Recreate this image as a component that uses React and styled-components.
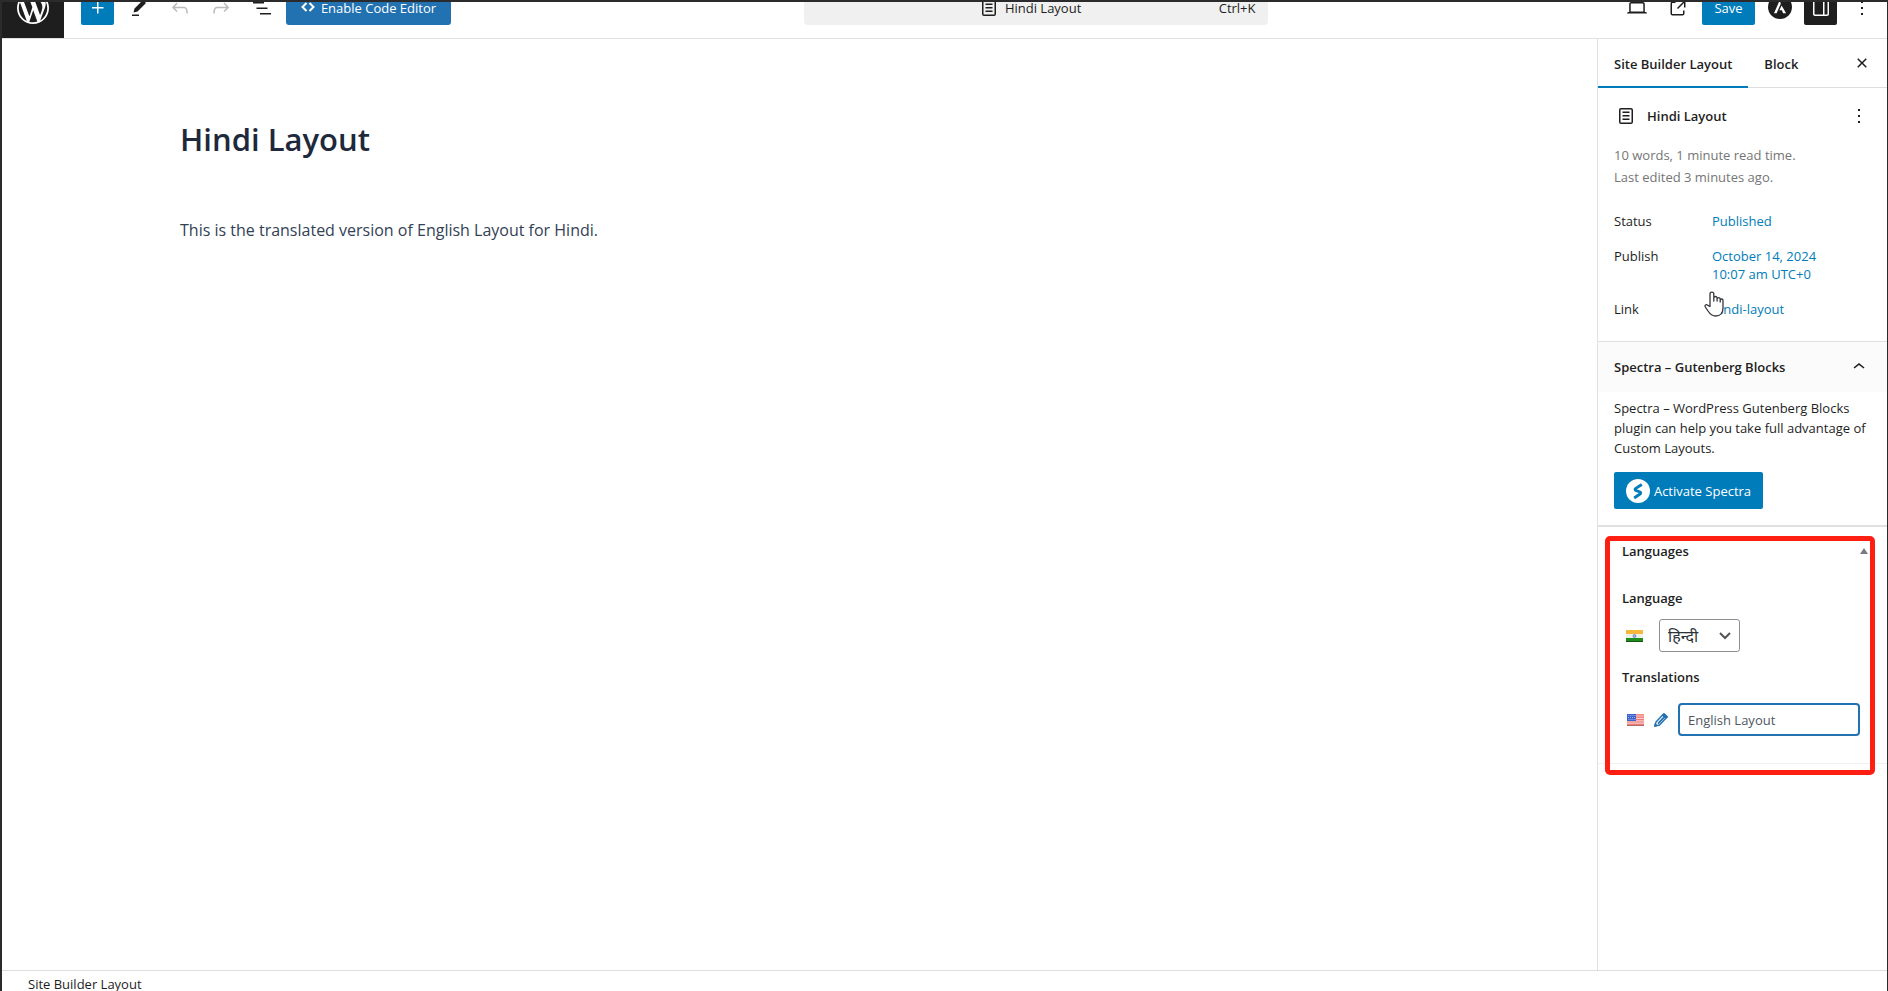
import React, { useState } from 'react'
import styled, { createGlobalStyle, css } from 'styled-components'

const ICONS = {
    plus: "M11 12.5V17.5H12.5V12.5H17.5V11H12.5V6H11V11H6V12.5H11Z",
    tools: "m19 7-3-3-8.5 8.5-1 4 4-1L19 7Zm-7 11.5H5V20h7v-1.5Z",
    undo: "M18.3 11.7c-.6-.6-1.4-.9-2.3-.9H6.7l2.9-3.3-1.1-1-4.5 5L8.5 16l1-1-2.7-2.7H16c.5 0 .9.2 1.3.5 1 1 1 3.4 1 4.5v.3h1.5v-.2c0-1.5 0-4.3-1.5-5.7z",
    redo: "M15.6 6.5l-1.1 1 2.9 3.3H8c-.9 0-1.7.3-2.3.9-1.4 1.5-1.4 4.2-1.4 5.6v.2h1.5v-.3c0-1.1 0-3.5 1-4.5.3-.3.7-.5 1.3-.5h9.2L14.5 15l1.1 1.1 4.6-4.6-4.6-5z",
    list: "M3 6h11v1.5H3V6Zm3.5 5.5h11V13h-11v-1.5ZM21 17H10v1.5h11V17Z",
    desktop: "M20.5 16h-.7V8c0-1.1-.9-2-2-2H6.2c-1.1 0-2 .9-2 2v8h-.7c-.8 0-1.5.7-1.5 1.5h20c0-.8-.7-1.5-1.5-1.5zM5.7 8c0-.3.2-.5.5-.5h11.6c.3 0 .5.2.5.5v7.6H5.7V8z",
    external: "M19.5 4.5h-7V6h4.44l-5.97 5.97 1.06 1.06L18 7.06v4.44h1.5v-7Zm-13 1a2 2 0 0 0-2 2v10a2 2 0 0 0 2 2h10a2 2 0 0 0 2-2v-3H17v3a.5.5 0 0 1-.5.5h-10a.5.5 0 0 1-.5-.5v-10a.5.5 0 0 1 .5-.5h3V5.5h-3Z",
    drawer: "M18 4H6c-1.1 0-2 .9-2 2v12c0 1.1.9 2 2 2h12c1.1 0 2-.9 2-2V6c0-1.1-.9-2-2-2zm-4 14.5H6c-.3 0-.5-.2-.5-.5V6c0-.3.2-.5.5-.5h8v13zm4.5-.5c0 .3-.2.5-.5.5h-2.5v-13H18c.3 0 .5.2.5.5v12z",
    more: "M13 19h-2v-2h2v2zm0-6h-2v-2h2v2zm0-6h-2V5h2v2z",
    page: "M15.5 7.5h-7V9h7V7.5Zm-7 3.5h7v1.5h-7V11Zm7 3.5h-7V16h7v-1.5ZM17 4H7a2 2 0 0 0-2 2v12a2 2 0 0 0 2 2h10a2 2 0 0 0 2-2V6a2 2 0 0 0-2-2ZM7 5.5h10a.5.5 0 0 1 .5.5v12a.5.5 0 0 1-.5.5H7a.5.5 0 0 1-.5-.5V6a.5.5 0 0 1 .5-.5Z",
    close: "M12 13.06l3.712 3.713 1.061-1.06L13.061 12l3.712-3.712-1.06-1.06L12 10.938 8.288 7.227l-1.061 1.06L10.939 12l-3.712 3.712 1.06 1.061L12 13.061z",
    up: "M6.5 12.4L12 8l5.5 4.4-.9 1.2L12 10l-4.5 3.6-1-1.2z",
}

const Icon = ({ name, size = 24 }) => (
    <svg width={size} height={size} viewBox="0 0 24 24" fill="currentColor" fillRule="evenodd" aria-hidden="true">
        <path d={ICONS[name]} />
    </svg>
)

const WordPressIcon = () => (
    <svg width="32" height="32" viewBox="0 0 20 20" fill="currentColor" aria-hidden="true">
        <path fillRule="evenodd" d="M20 10c0-5.51-4.49-10-10-10C4.48 0 0 4.49 0 10c0 5.52 4.48 10 10 10 5.51 0 10-4.48 10-10zM7.78 15.37L4.37 6.22c.55-.02 1.17-.08 1.17-.08.5-.06.44-1.13-.06-1.11 0 0-1.45.11-2.37.11-.18 0-.37 0-.58-.01C4.12 2.69 6.87 1.11 10 1.11c2.33 0 4.45.87 6.05 2.34-.68-.11-1.65.39-1.65 1.58 0 .74.45 1.36.9 2.1.35.61.55 1.36.55 2.46 0 1.49-1.4 5-1.4 5l-3.03-8.37c.54-.02.82-.17.82-.17.5-.05.44-1.25-.06-1.22 0 0-1.44.12-2.38.12-.87 0-2.33-.12-2.33-.12-.5-.03-.56 1.2-.06 1.22l.92.08 1.26 3.41zM17.41 10c.24-.64.74-1.87.43-4.25.7 1.29 1.05 2.71 1.05 4.25 0 3.29-1.73 6.24-4.4 7.78.97-2.59 1.94-5.2 2.92-7.78zM6.1 18.09C3.12 16.65 1.11 13.53 1.11 10c0-1.3.23-2.48.72-3.59C3.25 10.3 4.67 14.2 6.1 18.09zm4.03-6.63l2.58 6.98c-.86.29-1.76.45-2.71.45-.79 0-1.57-.11-2.29-.33.81-2.38 1.62-4.74 2.42-7.1z" />
    </svg>
)

const CodeIcon = () => (
    <svg width="14" height="14" viewBox="0 0 14 14" fill="none" stroke="currentColor" strokeWidth="2" aria-hidden="true">
        <path d="M5.5 2L1.5 6l4 4M8.5 2l4 4-4 4" />
    </svg>
)

const AstraIcon = () => (
    <svg width="24" height="24" viewBox="0 0 24 24" aria-hidden="true">
        <circle cx="12" cy="11" r="12" fill="#1e1e1e" />
        <path d="M11.6 4.5L6 17.2h2.6l4.2-9.5zM13.6 9.5l-2.2 4.7h2.5l1.2 3h3z" fill="#fff" />
    </svg>
)

const SpectraIcon = () => (
    <svg width="24" height="24" viewBox="0 0 24 24" aria-hidden="true">
        <circle cx="12" cy="12" r="12" fill="#fff" />
        <path d="M15.8 5.5L9.8 9.4Q8.3 10.6 9.8 11.6L14 13Q15.5 13.9 14 15L8.2 19" fill="none" stroke="#007cba" strokeWidth="2.8" />
    </svg>
)

const IndiaFlag = () => (
    <svg width="17" height="12" viewBox="0 0 17 12" role="img" aria-label="हिन्दी">
        <rect width="17" height="4" fill="#f5b83d" />
        <rect y="4" width="17" height="4" fill="#eef0ea" />
        <rect y="8" width="17" height="4" fill="#1f8a1f" />
        <rect y="11" width="17" height="1" fill="#14550f" />
        <circle cx="8.5" cy="6" r="1.5" fill="#9db4d8" stroke="#4a6fae" strokeWidth=".6" />
    </svg>
)

const UsFlag = () => (
    <svg width="17" height="12" viewBox="0 0 17 12" role="img" aria-label="English">
        <rect width="17" height="12" fill="#f9c9c6" />
        <path d="M0 .8h17M0 3.2h17M0 5.6h17M0 8h17M0 10.4h17" stroke="#ee7d78" strokeWidth="1.2" />
        <rect width="9" height="7" fill="#3c62cf" />
        <path d="M1.5 1.5h7M1 3.5h7M1.5 5.5h7" stroke="#b9c8f5" strokeWidth=".8" strokeDasharray="1 1" />
        <path d="M0 11.5h17" stroke="#b06a6a" />
    </svg>
)

const PencilIcon = () => (
    <svg width="16" height="16" viewBox="0 0 16 16" fill="none" stroke="#2271b1" aria-hidden="true">
        <path d="M2 14l1-4 7.5-8 3.5 3L6.5 13z" fill="#fff" strokeWidth="1.4" strokeLinejoin="round" />
        <path d="M9.2 3.4l3.6 3.2L14.6 4.8 11.2 1.4z" fill="#2271b1" />
        <path d="M5 11.6L11 5.4" strokeWidth="1.8" />
        <path d="M1.6 14.4l.6-2.8 2 2z" fill="#2271b1" />
    </svg>
)

const HandCursor = () => (
    <svg width="20" height="26" viewBox="0 0 20 26" aria-hidden="true">
        <path d="M6 15.5V3a1.9 1.9 0 0 1 3.8 0v7V6.8a1.7 1.7 0 0 1 3.3 0V10 7.8a1.6 1.6 0 0 1 3.1 0V11 9.4a1.4 1.4 0 0 1 2.8 0V17c0 5-2.5 8-7.5 8-4 0-5.5-2-7.5-5L1.3 16c-.9-1.6.8-3 2.2-1.9z"
            fill="#fff" stroke="#33363d" strokeWidth="1.3" strokeLinejoin="round" />
    </svg>
)

const App = () => {
    const [translation, setTranslation] = useState("English Layout")
    const [language, setLanguage] = useState("hi")

    return (
        <Frame>
            <GlobalStyle />
            <Header>
                <HomeLink href="#" aria-label="View site"><WordPressIcon /></HomeLink>
                <LeftTools>
                    <ToolButton $primary aria-label="Add block"><Icon name="plus" /></ToolButton>
                    <ToolButton aria-label="Tools"><Icon name="tools" /></ToolButton>
                    <ToolButton aria-label="Undo" disabled><Icon name="undo" /></ToolButton>
                    <ToolButton aria-label="Redo" disabled><Icon name="redo" /></ToolButton>
                    <ToolButton aria-label="Document overview"><Icon name="list" /></ToolButton>
                    <CodeButton><CodeIcon />Enable Code Editor</CodeButton>
                </LeftTools>
                <Center>
                    <CommandBar>
                        <CommandTitle><Icon name="page" />Hindi Layout</CommandTitle>
                        <Shortcut>Ctrl+K</Shortcut>
                    </CommandBar>
                </Center>
                <RightTools>
                    <ToolButton aria-label="Preview"><Icon name="desktop" /></ToolButton>
                    <ToolButton aria-label="View"><Icon name="external" /></ToolButton>
                    <SaveButton>Save</SaveButton>
                    <ToolButton aria-label="Astra settings"><AstraIcon /></ToolButton>
                    <ToolButton $dark aria-label="Settings"><Icon name="drawer" /></ToolButton>
                    <ToolButton aria-label="Options"><Icon name="more" /></ToolButton>
                </RightTools>
            </Header>

            <Body>
                <Canvas>
                    <Title>Hindi Layout</Title>
                    <Paragraph>This is the translated version of English Layout for Hindi.</Paragraph>
                </Canvas>

                <Sidebar>
                    <Tabs>
                        <Tab $active>Site Builder Layout</Tab>
                        <Tab>Block</Tab>
                        <CloseButton aria-label="Close settings"><Icon name="close" /></CloseButton>
                    </Tabs>

                    <Summary>
                        <SummaryHead>
                            <Icon name="page" />
                            <SummaryTitle>Hindi Layout</SummaryTitle>
                            <IconButton aria-label="Actions"><Icon name="more" /></IconButton>
                        </SummaryHead>
                        <Meta>10 words, 1 minute read time.<br />Last edited 3 minutes ago.</Meta>
                        <Fields>
                            <dt>Status</dt>
                            <dd><a href="#status">Published</a></dd>
                            <dt>Publish</dt>
                            <dd><a href="#publish">October 14, 2024<br />10:07 am UTC+0</a></dd>
                            <dt>Link</dt>
                            <dd><a href="#link">hindi-layout</a><Pointer><HandCursor /></Pointer></dd>
                        </Fields>
                    </Summary>

                    <PanelHead>
                        <span>Spectra – Gutenberg Blocks</span>
                        <Icon name="up" />
                    </PanelHead>
                    <PanelBody>
                        <p>Spectra – WordPress Gutenberg Blocks plugin can help you take full advantage of Custom Layouts.</p>
                        <SpectraButton><SpectraIcon />Activate Spectra</SpectraButton>
                    </PanelBody>

                    <MetaBox>
                        <Highlight />
                        <MetaHead>Languages<Triangle /></MetaHead>
                        <Label htmlFor="language">Language</Label>
                        <LanguageRow>
                            <IndiaFlag />
                            <Select id="language" value={language} onChange={(e) => setLanguage(e.target.value)}>
                                <option value="hi">हिन्दी</option>
                            </Select>
                        </LanguageRow>
                        <Label htmlFor="translation">Translations</Label>
                        <TranslationRow>
                            <UsFlag />
                            <PencilIcon />
                            <Input id="translation" type="text" value={translation} onChange={(e) => setTranslation(e.target.value)} />
                        </TranslationRow>
                    </MetaBox>
                </Sidebar>
            </Body>

            <Footer>Site Builder Layout</Footer>
        </Frame>
    )
}

export default App

const GlobalStyle = createGlobalStyle`
    * {
        box-sizing: border-box;
    }
    body {
        margin: 0;
        background: #fff;
        color: #1e1e1e;
        font-family: "Open Sans", "Noto Sans", sans-serif;
        font-size: 13px;
    }
    button, input, select {
        font: inherit;
        color: inherit;
    }
    p {
        margin: 0;
    }
    a {
        color: #007cba;
        text-decoration: none;
    }
    svg {
        flex: none;
        display: block;
    }
`

const Frame = styled.div`
    display: flex;
    flex-direction: column;
    height: 100vh;
    overflow: hidden;
    border: solid #2b2b2e;
    border-width: 2px 1px 0 2px;
`

/* the bar is scrolled partly out of the top of the window */
const Header = styled.header`
    flex: none;
    display: flex;
    align-items: flex-end;
    height: 37px;
    overflow: hidden;
    border-bottom: 1px solid #e0e0e0;
`

const HomeLink = styled.a`
    display: flex;
    align-items: center;
    justify-content: center;
    width: 62px;
    height: 60px;
    background: #1e1e1e;
    color: #fff;
`

const tools = css`
    display: flex;
    align-items: center;
    height: 60px;
    gap: 8px;
    line-height: 12px;
`

const LeftTools = styled.div`
    ${tools}
    padding-left: 17px;
`

const RightTools = styled.div`
    ${tools}
    padding-right: 9px;
`

const ToolButton = styled.button`
    display: flex;
    align-items: center;
    justify-content: center;
    width: 33px;
    height: 33px;
    padding: 0;
    border: 0;
    border-radius: 2px;
    background: ${({ $primary, $dark }) => $primary ? "#007cba" : $dark ? "#1e1e1e" : "none"};
    color: ${({ $primary, $dark }) => $primary || $dark ? "#fff" : "#1e1e1e"};

    &:disabled {
        color: #bbb;
    }
`

const CodeButton = styled.button`
    display: flex;
    align-items: center;
    justify-content: center;
    gap: 6px;
    width: 165px;
    height: 33px;
    padding: 0;
    border: 0;
    border-radius: 3px;
    background: #2271b1;
    color: #fff;
`

const SaveButton = styled.button`
    width: 53px;
    height: 33px;
    padding: 0;
    border: 0;
    border-radius: 2px;
    background: #007cba;
    color: #fff;
`

const Center = styled.div`
    ${tools}
    flex: 1;
    justify-content: center;
`

const CommandBar = styled.button`
    display: flex;
    align-items: center;
    width: 464px;
    height: 33px;
    padding: 0 12px;
    border: 0;
    border-radius: 4px;
    background: #f0f0f0;
`

const CommandTitle = styled.span`
    flex: 1;
    display: flex;
    align-items: center;
    justify-content: center;
    gap: 4px;
    padding-left: 24px;
`

const Shortcut = styled.span`
    flex: none;
`

const Body = styled.div`
    flex: 1;
    display: flex;
    min-height: 0;
`

const Canvas = styled.main`
    flex: 1;
    padding: 76px 178px;
`

const Title = styled.h1`
    margin: 0 0 55px;
    color: #1e293b;
    font-size: 31px;
    line-height: 48px;
    font-weight: 600;
`

const Paragraph = styled.p`
    color: #334155;
    font-size: 16px;
    line-height: 24px;
`

const Sidebar = styled.aside`
    flex: none;
    width: 290px;
    border-left: 1px solid #e0e0e0;
`

const Tabs = styled.div`
    display: flex;
    align-items: center;
    height: 49px;
    border-bottom: 1px solid #ddd;
`

const Tab = styled.button`
    height: 49px;
    padding: 2px 16px 0;
    border: 0;
    background: none;
    font-weight: 600;
    box-shadow: ${({ $active }) => $active ? "inset 0 -2px #007cba" : "none"};
`

const IconButton = styled.button`
    display: flex;
    margin-left: auto;
    padding: 0;
    border: 0;
    background: none;
`

const CloseButton = styled(IconButton)`
    margin-right: 13px;
`

const Summary = styled.section`
    padding: 16px 16px 23px;
`

const SummaryHead = styled.div`
    display: flex;
    align-items: center;
    height: 24px;
`

const SummaryTitle = styled.h2`
    margin: 0 0 0 9px;
    font-size: 13px;
    font-weight: 600;
`

const Meta = styled.p`
    margin-top: 16px;
    color: #757575;
    line-height: 22px;
`

const Fields = styled.dl`
    display: grid;
    grid-template-columns: 98px 1fr;
    row-gap: 17px;
    margin: 24px 0 0;
    line-height: 18px;

    dd {
        position: relative;
        margin: 0;
    }
`

const Pointer = styled.span`
    position: absolute;
    left: -8px;
    top: -9px;
`

const PanelHead = styled.button`
    display: flex;
    align-items: center;
    justify-content: space-between;
    width: 100%;
    height: 51px;
    padding: 0 16px;
    border: 0;
    border-top: 1px solid #e0e0e0;
    background: #fbfbfb;
    font-weight: 600;
`

const PanelBody = styled.div`
    padding: 6px 16px 16px;
    border-bottom: 2px solid #e0e0e0;
    line-height: 20px;
`

const SpectraButton = styled.button`
    display: flex;
    align-items: center;
    justify-content: center;
    gap: 4px;
    width: 149px;
    height: 37px;
    margin-top: 14px;
    padding: 0;
    border: 0;
    border-radius: 2px;
    background: #007cba;
    color: #fff;
`

const MetaBox = styled.section`
    position: relative;
    height: 237px;
    padding: 14px 27px 0 24px;
    border-bottom: 1px solid #f0f0f0;
`

const Highlight = styled.div`
    position: absolute;
    inset: 9px 12px -12px 7px;
    border: 5px solid #ff1f12;
    border-radius: 5px;
    pointer-events: none;
`

const MetaHead = styled.h2`
    display: flex;
    align-items: center;
    justify-content: space-between;
    margin: 0 -8px 27px 0;
    font-size: 13px;
    line-height: 20px;
    font-weight: 600;
`

const Triangle = styled.span`
    border: solid transparent;
    border-width: 0 4px 6px;
    border-bottom-color: #787c82;
`

const Label = styled.label`
    display: block;
    line-height: 20px;
    font-weight: 600;
`

const LanguageRow = styled.div`
    display: flex;
    align-items: center;
    gap: 16px;
    margin: 11px 0 15px;
    padding-left: 4px;
`

const TranslationRow = styled.div`
    display: flex;
    align-items: center;
    gap: 9px;
    margin-top: 16px;
    padding-left: 5px;
`

const Select = styled.select`
    width: 81px;
    height: 33px;
    padding: 0 8px;
    border: 1px solid #8c8f94;
    border-radius: 3px;
    appearance: none;
    background: #fff url('data:image/svg+xml;utf8,<svg xmlns="http://www.w3.org/2000/svg" width="12" height="8" fill="none" stroke="%23555" stroke-width="2"><path d="M1 1l5 5 5-5"/></svg>') no-repeat right 8px center;
    color: #2c3338;
    font-size: 16px;
`

const Input = styled.input`
    flex: 1;
    min-width: 0;
    height: 33px;
    padding: 0 8px;
    border: 2px solid #2271b1;
    border-radius: 4px;
    background: #fff;
    color: #50575e;
    outline: none;
`

const Footer = styled.footer`
    flex: none;
    height: 21px;
    padding: 4px 26px 0;
    border-top: 1px solid #ddd;
    line-height: 18px;
    white-space: nowrap;
`
